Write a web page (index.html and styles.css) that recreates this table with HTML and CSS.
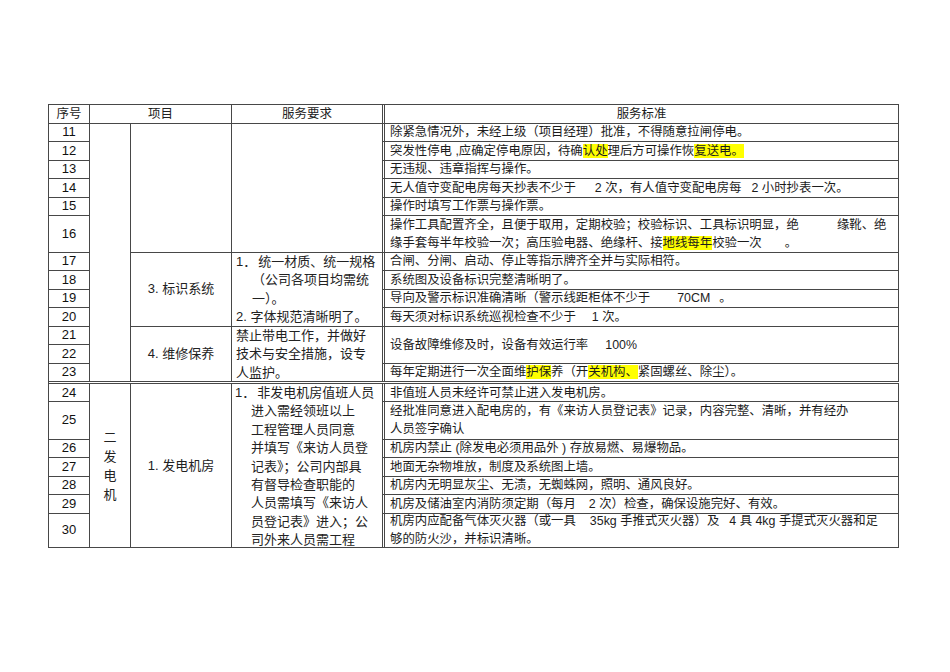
FILE: index.html
```html
<!DOCTYPE html>
<html lang="zh">
<head>
<meta charset="utf-8">
<title>服务标准</title>
<link rel="stylesheet" href="styles.css">
</head>
<body>
<div class="page">
  <div class="sheet">
    <div class="cell hd">序号</div>
    <div class="cell hd cs2">项目</div>
    <div class="cell hd req-col">服务要求</div>
    <div class="cell hd std hd-small">服务标准</div>

    <div class="cell no">11</div>
    <div class="cell cat rs13"></div>
    <div class="cell item rs6"></div>
    <div class="cell req rs6"></div>
    <div class="cell std">除紧急情况外，未经上级（项目经理）批准，不得随意拉闸停电。</div>

    <div class="cell no">12</div>
    <div class="cell std"><span>突发性停电 ,应确定停电原因，待确<span class="hl">认处</span>理后方可操作恢<span class="hl">复送电。</span></span></div>

    <div class="cell no">13</div>
    <div class="cell std">无违规、违章指挥与操作。</div>

    <div class="cell no">14</div>
    <div class="cell std"><span>无人值守变配电房每天抄表不少于<span class="gap g19"></span>2 次，有人值守变配电房每<span class="gap g10"></span>2 小时抄表一次。</span></div>

    <div class="cell no">15</div>
    <div class="cell std">操作时填写工作票与操作票。</div>

    <div class="cell no">16</div>
    <div class="cell std"><span>操作工具配置齐全，且便于取用，定期校验；校验标识、工具标识明显，绝<span class="gap g38"></span>缘靴、绝<br>缘手套每半年校验一次；高压验电器、绝缘杆、接<span class="hl">地线每年</span>校验一次<span class="gap g23"></span>。</span></div>

    <div class="cell no">17</div>
    <div class="cell item rs4">3. 标识系统</div>
    <div class="cell req rs4"><div class="lines">1．<span class="ind">统一材质、统一规格</span><br><span class="pad"></span>（公司各项目均需统<br><span class="pad"></span>一）。<br>2. 字体规范清晰明了。</div></div>
    <div class="cell std">合闸、分闸、启动、停止等指示牌齐全并与实际相符。</div>

    <div class="cell no">18</div>
    <div class="cell std">系统图及设备标识完整清晰明了。</div>

    <div class="cell no">19</div>
    <div class="cell std"><span>导向及警示标识准确清晰（警示线距柜体不少于<span class="gap g27"></span>70CM<span class="gap g9"></span>。</span></div>

    <div class="cell no">20</div>
    <div class="cell std"><span>每天须对标识系统巡视检查不少于<span class="gap g16"></span>1 次。</span></div>

    <div class="cell no">21</div>
    <div class="cell item rs3">4. 维修保养</div>
    <div class="cell req rs3"><div class="lines">禁止带电工作，并做好<br>技术与安全措施，设专<br>人监护。</div></div>
    <div class="cell std rs2"><span>设备故障维修及时，设备有效运行率<span class="gap g17"></span>100%</span></div>

    <div class="cell no">22</div>

    <div class="cell no">23</div>
    <div class="cell std"><span>每年定期进行一次全面维<span class="hl">护保</span>养（开<span class="hl">关机构、</span>紧固螺丝、除尘）。</span></div>

    <div class="cell no split">24</div>
    <div class="cell cat rs7 split"><div class="vert">二<br>发<br>电<br>机</div></div>
    <div class="cell item rs7 split">1. 发电机房</div>
    <div class="cell req rs7 split"><div class="lines tall">1．<span class="ind">非发电机房值班人员</span><br><span class="pad"></span>进入需经领班以上<br><span class="pad"></span>工程管理人员同意<br><span class="pad"></span>并填写《来访人员登<br><span class="pad"></span>记表》；公司内部具<br><span class="pad"></span>有督导检查职能的<br><span class="pad"></span>人员需填写《来访人<br><span class="pad"></span>员登记表》进入；公<br><span class="pad"></span>司外来人员需工程</div></div>
    <div class="cell std split">非值班人员未经许可禁止进入发电机房。</div>

    <div class="cell no">25</div>
    <div class="cell std"><span>经批准同意进入配电房的，有《来访人员登记表》记录，内容完整、清晰，并有经办<br>人员签字确认</span></div>

    <div class="cell no">26</div>
    <div class="cell std">机房内禁止 (除发电必须用品外 ) 存放易燃、易爆物品。</div>

    <div class="cell no">27</div>
    <div class="cell std">地面无杂物堆放，制度及系统图上墙。</div>

    <div class="cell no">28</div>
    <div class="cell std">机房内无明显灰尘、无渍，无蜘蛛网，照明、通风良好。</div>

    <div class="cell no">29</div>
    <div class="cell std"><span>机房及储油室内消防须定期（每月<span class="gap g13"></span>2 次）检查，确保设施完好、有效。</span></div>

    <div class="cell no">30</div>
    <div class="cell std"><span>机房内应配备气体灭火器（或一具<span class="gap g14"></span>35kg 手推式灭火器）及<span class="gap g10"></span>4 具 4kg 手提式灭火器和足<br>够的防火沙，并标识清晰。</span></div>
  </div>
</div>
</body>
</html>
```

FILE: styles.css
```css
html, body {
  margin: 0;
  padding: 0;
  background: #ffffff;
}

body {
  font-family: "Liberation Sans", "Noto Sans CJK SC", sans-serif;
  color: #1c1c1c;
}

.page {
  width: 950px;
  height: 672px;
  padding: 104px 0 0 48px;
  box-sizing: border-box;
}

.sheet {
  display: grid;
  width: 851px;
  box-sizing: border-box;
  border-top: 1px solid #474747;
  border-left: 1px solid #474747;
  grid-template-columns: 41px 41px 101px 150px 517px;
  grid-template-rows:
    18.5px
    18.5px 18.5px 18.5px 18.5px 18.5px
    36.5px
    18.5px 18.5px 18.5px 18.5px 18.5px 18.5px 18.5px
    20px 37.5px
    18.5px 18.5px 18.5px 18.5px
    34.5px;
}

.cell {
  box-sizing: border-box;
  border-right: 1px solid #474747;
  border-bottom: 1px solid #474747;
  white-space: nowrap;
  min-width: 0;
  min-height: 0;
}

.cs2 { grid-column: span 2; }
.rs2 { grid-row: span 2; }
.rs3 { grid-row: span 3; }
.rs4 { grid-row: span 4; }
.rs6 { grid-row: span 6; }
.rs7 { grid-row: span 7; }
.rs13 { grid-row: span 13; }

.hd {
  display: flex;
  align-items: center;
  justify-content: center;
  font-size: 12.5px;
  line-height: 16px;
  color: #222;
}

.hd-small {
  font-size: 10.5px;
  color: #333;
}

.req-col {
  border-right: 0;
}

.no {
  display: flex;
  align-items: center;
  justify-content: center;
  font-size: 13px;
  line-height: 16px;
  color: #111;
}

.cat {
  display: flex;
  align-items: center;
  justify-content: center;
}

.vert {
  font-size: 13px;
  line-height: 19px;
  color: #222;
  text-align: center;
}

.item {
  display: flex;
  align-items: center;
  justify-content: center;
  font-size: 13px;
  line-height: 18px;
  color: #222;
}

.req {
  border-right: 0;
  font-size: 13px;
  color: #222;
}

.lines {
  padding-left: 4px;
  line-height: 18.5px;
}

.lines.tall {
  padding-left: 3px;
  line-height: 18.4px;
}

.pad {
  display: inline-block;
  width: 16px;
}

.ind {
  margin-left: 2px;
}

.std {
  display: flex;
  align-items: center;
  border-left: 3px double #474747;
  padding-left: 5px;
  font-size: 12.4px;
  line-height: 18px;
  color: #1c1c1c;
}

.hd.std {
  justify-content: center;
  padding-left: 0;
}

.split {
  margin-top: 1px;
  border-top: 1px solid #474747;
}

.hl {
  background: #ffff00;
}

.gap {
  display: inline-block;
}

.g9 { width: 9px; }
.g10 { width: 10px; }
.g13 { width: 13px; }
.g14 { width: 14px; }
.g16 { width: 16px; }
.g17 { width: 17px; }
.g19 { width: 19px; }
.g23 { width: 23px; }
.g27 { width: 27px; }
.g38 { width: 38px; }
```
